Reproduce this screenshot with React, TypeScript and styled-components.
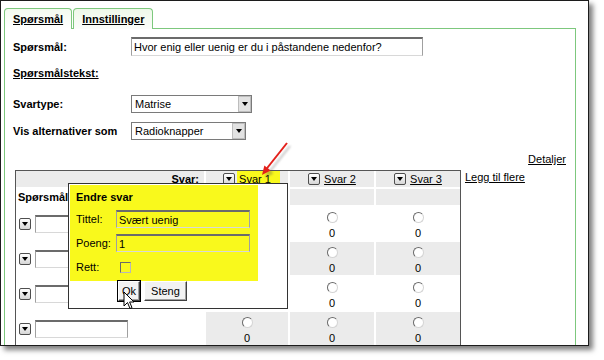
import React from "react"
import styled, { createGlobalStyle } from "styled-components"

const GlobalStyle = createGlobalStyle`
  html, body {
    margin: 0;
    padding: 0;
    background: #fff;
  }
  body {
    font-family: "Liberation Sans", Arial, sans-serif;
    font-size: 11px;
    color: #000;
    -webkit-font-smoothing: antialiased;
  }
`

const green = "#7dc87d"
const yellow = "#f9f91c"
const cellGray = "#ebebeb"

const Page = styled.div`
  width: 604px;
  height: 360px;
  overflow: hidden;
  background: #fff;
`

const Window = styled.div`
  position: relative;
  width: 589px;
  height: 346px;
  box-sizing: border-box;
  border: 1px solid #1c1c1c;
  background: #fff;
  overflow: hidden;
  box-shadow: 4px 4px 5px rgba(0, 0, 0, 0.5);
`

const TabBar = styled.div`
  position: relative;
  z-index: 1;
  display: flex;
  gap: 1px;
  margin: 7px 0 -1px 3px;
`

const Tab = styled.div<{ $active?: boolean }>`
  display: flex;
  align-items: center;
  height: 21px;
  box-sizing: border-box;
  padding: 0 8px;
  border: 1px solid ${green};
  border-bottom: none;
  border-radius: 4px 4px 0 0;
  background: ${p =>
    p.$active
      ? "linear-gradient(#f3faef, #ffffff)"
      : "linear-gradient(#eef8e9, #fbfdfa)"};
  font-weight: bold;
  text-decoration: underline;
`

const Panel = styled.div`
  margin-left: 3px;
  width: 572px;
  height: 400px;
  box-sizing: border-box;
  border: 1px solid ${green};
  padding: 8px 8px 0 8px;
`

const FieldRow = styled.div<{ $mt?: number; $h?: number }>`
  display: flex;
  align-items: center;
  margin-top: ${p => p.$mt || 0}px;
  height: ${p => p.$h || 18}px;
`

const Label = styled.span<{ $underline?: boolean }>`
  width: 118px;
  flex-shrink: 0;
  font-weight: bold;
  text-decoration: ${p => (p.$underline ? "underline" : "none")};
`

const TextInput = styled.input<{ $w: number; $h?: number; $clear?: boolean }>`
  width: ${p => p.$w}px;
  height: ${p => p.$h || 18}px;
  box-sizing: border-box;
  margin: 0;
  padding: 0 2px;
  border-style: solid;
  border-width: 2px 1px 1px 1px;
  border-color: #6b6b6b #a0a0a0 #d8d8d8 #a0a0a0;
  background: ${p => (p.$clear ? "transparent" : "#fff")};
  font-family: "Liberation Sans", Arial, sans-serif;
  font-size: 11px;
  color: #000;
  outline: none;
`

const FakeSelect = styled.div<{ $w: number }>`
  display: flex;
  align-items: center;
  justify-content: space-between;
  width: ${p => p.$w}px;
  height: 18px;
  box-sizing: border-box;
  border: 1px solid #7a7a7a;
  padding-left: 3px;
  background: #fff;
`

const SelectArrow = styled.span`
  display: flex;
  align-items: center;
  justify-content: center;
  width: 13px;
  height: 16px;
  box-sizing: border-box;
  border: 1px solid #bdbdbd;
  background: #e2e2e2;

  &::after {
    content: "";
    border-left: 3px solid transparent;
    border-right: 3px solid transparent;
    border-top: 4px solid #000;
  }
`

const LinkRow = styled.div`
  display: flex;
  justify-content: flex-end;
  margin-top: 12px;
  padding-right: 1px;
  line-height: 14px;
`

const TextLink = styled.a`
  color: #000;
  text-decoration: underline;
  cursor: pointer;
  line-height: 14px;
`

const TableArea = styled.div`
  display: flex;
  align-items: flex-start;
  gap: 4px;
  margin: 4px 0 0 2px;
`

const TableWrap = styled.div`
  position: relative;
`

const Grid = styled.div`
  display: grid;
  grid-template-columns: 188px 82px 84px 84px;
  grid-template-rows: 16px 16px repeat(4, 33px);
  gap: 2px;
  width: 446px;
  box-sizing: border-box;
  border: 1px solid #555;
  background: #fff;
`

const Cell = styled.div<{ $gray?: boolean; $align?: string }>`
  display: flex;
  align-items: center;
  justify-content: ${p => p.$align || "flex-start"};
  gap: 4px;
  background: ${p => (p.$gray ? cellGray : "#fff")};
`

const HeadText = styled.span<{ $pl?: number; $pr?: number }>`
  font-weight: bold;
  padding-left: ${p => p.$pl || 0}px;
  padding-right: ${p => p.$pr || 0}px;
`

const MenuButton = styled.span`
  display: flex;
  align-items: center;
  justify-content: center;
  width: 12px;
  height: 12px;
  flex-shrink: 0;
  box-sizing: border-box;
  border: 1px solid #4e4e4e;
  border-radius: 2px;
  background: linear-gradient(#ffffff, #d6d6d6);

  &::after {
    content: "";
    border-left: 3px solid transparent;
    border-right: 3px solid transparent;
    border-top: 4px solid #000;
  }
`

const Highlight = styled.span`
  align-self: stretch;
  display: flex;
  align-items: center;
  margin: 0 -9px 0 -2px;
  padding: 0 9px 0 2px;
  background: ${yellow};
`

const QuestionCell = styled(Cell)`
  padding-left: 3px;
`

const AnswerCell = styled(Cell)`
  flex-direction: column;
  align-items: center;
  justify-content: flex-start;
  gap: 0;
  padding-top: 5px;
  box-sizing: border-box;
`

const Radio = styled.span`
  width: 11px;
  height: 11px;
  box-sizing: border-box;
  border-radius: 50%;
  border: 1px solid;
  border-color: #6a6a6a #d4d4d4 #d4d4d4 #6a6a6a;
  background: #fff;
  margin-bottom: 4px;
`

const Score = styled.span`
  line-height: 13px;
  color: #000;
`

const Popup = styled.div`
  position: absolute;
  left: 53px;
  top: 13px;
  z-index: 2;
  width: 220px;
  height: 126px;
  box-sizing: border-box;
  border: 1px solid #333;
  background: #fff;
  padding: 1px;
`

const YellowBox = styled.div`
  width: 188px;
  height: 96px;
  box-sizing: border-box;
  padding: 5px 0 0 6px;
  background: ${yellow};
`

const PopupTitle = styled.div`
  font-weight: bold;
  line-height: 14px;
`

const PopupLabel = styled.span`
  width: 40px;
  flex-shrink: 0;
`

const Checkbox = styled.span`
  width: 11px;
  height: 11px;
  box-sizing: border-box;
  margin-left: 4px;
  border: 1px solid;
  border-color: #6a6a6a #b8b8b8 #b8b8b8 #6a6a6a;
`

const ButtonRow = styled.div`
  display: flex;
  gap: 4px;
  padding-left: 48px;
`

const Button = styled.button<{ $default?: boolean }>`
  height: 20px;
  margin: 0;
  padding: 0 ${p => (p.$default ? 3 : 6)}px;
  box-sizing: border-box;
  border: 1px solid;
  border-color: #fff #404040 #404040 #fff;
  box-shadow: ${p =>
    p.$default
      ? "0 0 0 1px #000, inset -1px -1px #a0a0a0"
      : "inset -1px -1px #a0a0a0"};
  background: #f2f2f2;
  font-family: "Liberation Sans", Arial, sans-serif;
  font-size: 11px;
  color: #000;
`

const Cursor = styled.svg`
  position: absolute;
  left: 108px;
  top: 121px;
  z-index: 3;
`

const Callout = styled.svg`
  position: absolute;
  left: 253px;
  top: 135px;
  z-index: 3;
`

const answers = ["Svar 1", "Svar 2", "Svar 3"]

const QuestionRow = ({ index }: { index: number }) => (
  <>
    <QuestionCell>
      <MenuButton />
      <TextInput $w={93} readOnly value="" />
    </QuestionCell>
    {answers.map(a => (
      <AnswerCell key={a} $gray={index % 2 === 1}>
        <Radio />
        <Score>0</Score>
      </AnswerCell>
    ))}
  </>
)

export default function App() {
  return (
    <Page>
      <GlobalStyle />
      <Window>
        <TabBar>
          <Tab $active>Spørsmål</Tab>
          <Tab>Innstillinger</Tab>
        </TabBar>
        <Panel>
          <FieldRow $h={19}>
            <Label>Spørsmål:</Label>
            <TextInput
              $w={292}
              $h={19}
              readOnly
              value="Hvor enig eller uenig er du i påstandene nedenfor?"
            />
          </FieldRow>
          <FieldRow $mt={9} $h={16}>
            <Label $underline>Spørsmålstekst:</Label>
          </FieldRow>
          <FieldRow $mt={14}>
            <Label>Svartype:</Label>
            <FakeSelect $w={121}>
              Matrise
              <SelectArrow />
            </FakeSelect>
          </FieldRow>
          <FieldRow $mt={9}>
            <Label>Vis alternativer som</Label>
            <FakeSelect $w={115}>
              Radioknapper
              <SelectArrow />
            </FakeSelect>
          </FieldRow>
          <LinkRow>
            <TextLink>Detaljer</TextLink>
          </LinkRow>
          <TableArea>
            <TableWrap>
              <Grid>
                <Cell $gray $align="flex-end">
                  <HeadText $pr={5}>Svar:</HeadText>
                </Cell>
                {answers.map((a, i) => (
                  <Cell key={a} $gray $align="center">
                    <MenuButton />
                    {i === 0 ? (
                      <Highlight>
                        <TextLink>{a}</TextLink>
                      </Highlight>
                    ) : (
                      <TextLink>{a}</TextLink>
                    )}
                  </Cell>
                ))}
                <Cell>
                  <HeadText $pl={2}>Spørsmål</HeadText>
                </Cell>
                {answers.map(a => (
                  <Cell key={a} $gray />
                ))}
                {[0, 1, 2, 3].map(i => (
                  <QuestionRow key={i} index={i} />
                ))}
              </Grid>
              <Popup>
                <YellowBox>
                  <PopupTitle>Endre svar</PopupTitle>
                  <FieldRow $mt={6}>
                    <PopupLabel>Tittel:</PopupLabel>
                    <TextInput $w={134} $clear readOnly value="Svært uenig" />
                  </FieldRow>
                  <FieldRow $mt={6}>
                    <PopupLabel>Poeng:</PopupLabel>
                    <TextInput $w={134} $clear readOnly value="1" />
                  </FieldRow>
                  <FieldRow $mt={8} $h={14}>
                    <PopupLabel>Rett:</PopupLabel>
                    <Checkbox />
                  </FieldRow>
                </YellowBox>
                <ButtonRow>
                  <Button $default>Ok</Button>
                  <Button>Steng</Button>
                </ButtonRow>
              </Popup>
              <Cursor width="13" height="20" viewBox="0 0 13 20">
                <path
                  d="M1 1 L1 15 L4.5 11.5 L7 17.5 L9 16.6 L6.6 11 L11 11 Z"
                  fill="#fff"
                  stroke="#000"
                  strokeWidth="1"
                  strokeLinejoin="round"
                />
              </Cursor>
            </TableWrap>
            <TextLink>Legg til flere</TextLink>
          </TableArea>
        </Panel>
        <Callout width="42" height="46" viewBox="0 0 42 46">
          <defs>
            <filter id="soft" x="-30%" y="-30%" width="160%" height="160%">
              <feGaussianBlur stdDeviation="1.2" />
            </filter>
          </defs>
          <g transform="translate(3 3)" opacity="0.35" filter="url(#soft)">
            <line x1="33" y1="7" x2="10" y2="36" stroke="#555" strokeWidth="2" />
            <polygon points="8,39 16.6,34.4 10.4,29.4" fill="#555" />
          </g>
          <line x1="33" y1="7" x2="10" y2="36" stroke="#e3201b" strokeWidth="2" />
          <polygon points="8,39 16.6,34.4 10.4,29.4" fill="#e3201b" />
        </Callout>
      </Window>
    </Page>
  )
}
